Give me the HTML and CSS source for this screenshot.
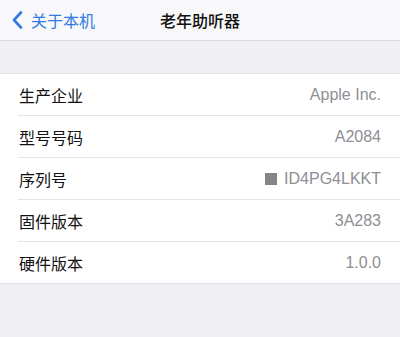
FILE: index.html
```html
<!DOCTYPE html>
<html lang="zh">
<head>
<meta charset="utf-8">
<link rel="stylesheet" href="styles.css">
</head>
<body>
<header class="nav">
  <a class="back">
    <svg class="chev" width="11" height="18" viewBox="0 0 11 18"><path d="M9 1.5 L2 9 L9 16.5" fill="none" stroke="#2f7ae5" stroke-width="2.6" stroke-linecap="round" stroke-linejoin="round"/></svg>
    <span>关于本机</span>
  </a>
  <h1 class="title">老年助听器</h1>
</header>
<div class="gap"></div>
<ul class="list">
  <li class="row"><span class="label">生产企业</span><span class="value">Apple Inc.</span></li>
  <li class="row"><span class="label">型号号码</span><span class="value">A2084</span></li>
  <li class="row"><span class="label">序列号</span><span class="value"><i class="sq"></i>ID4PG4LKKT</span></li>
  <li class="row"><span class="label">固件版本</span><span class="value">3A283</span></li>
  <li class="row"><span class="label">硬件版本</span><span class="value">1.0.0</span></li>
</ul>
</body>
</html>
```
FILE: styles.css
```css
* { box-sizing: border-box; }
html, body { margin: 0; padding: 0; }
body {
  width: 400px;
  height: 337px;
  background: #efeff4;
  font-family: "Liberation Sans", "Noto Sans CJK SC", sans-serif;
  overflow: hidden;
}
.nav {
  height: 41px;
  background: #f8f8fa;
  border-bottom: 1px solid #dcdce0;
  display: flex;
  align-items: center;
  justify-content: center;
  position: relative;
}
.back {
  position: absolute;
  left: 12px;
  top: 0;
  height: 40px;
  display: flex;
  align-items: center;
  gap: 8px;
  color: #2f7ae5;
  font-family: "Noto Sans CJK SC", sans-serif;
  font-size: 16px;
}
.chev { display: block; }
.title {
  margin: 0;
  font-family: "Noto Sans CJK SC", sans-serif;
  font-size: 16px;
  font-weight: 500;
  color: #111;
}
.gap { height: 32px; }
.list {
  list-style: none;
  margin: 0;
  padding: 0 0 0 18px;
  background: #fff;
  border-top: 1px solid #e2e2e6;
  border-bottom: 1px solid #e2e2e6;
}
.row {
  height: 42px;
  display: flex;
  align-items: center;
  justify-content: space-between;
  padding: 0 19px 0 1px;
  border-bottom: 1px solid #e4e4e8;
}
.row:last-child { border-bottom: none; height: 41px; }
.label {
  font-family: "Noto Sans CJK SC", sans-serif;
  font-size: 16px;
  color: #111;
}
.value {
  font-size: 16px;
  color: #8e8e93;
  display: flex;
  align-items: center;
  gap: 7px;
}
.sq {
  display: block;
  width: 12px;
  height: 12px;
  background: #858589;
}
```
